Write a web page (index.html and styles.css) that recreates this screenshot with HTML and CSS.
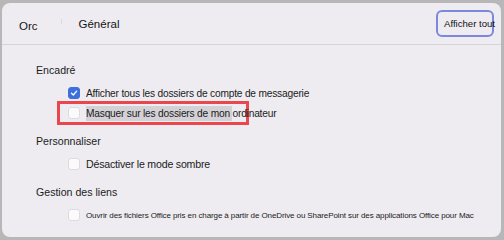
FILE: index.html
```html
<!DOCTYPE html>
<html lang="fr">
<head>
<meta charset="utf-8">
<link rel="stylesheet" href="styles.css">
</head>
<body>
<div class="window">
  <header class="header">
    <div class="tabs">
      <span class="tab tab-first">Orc</span>
      <span class="divider"></span>
      <span class="tab">Général</span>
    </div>
    <button class="show-all">Afficher tout</button>
  </header>
  <main class="content">
    <section class="group">
      <h2 class="group-title">Encadré</h2>
      <label class="option">
        <span class="box checked"><svg viewBox="0 0 12 12" width="12" height="12"><path d="M3 6.3 L5.2 8.4 L9.2 3.8" fill="none" stroke="#fff" stroke-width="1.6" stroke-linecap="round" stroke-linejoin="round"/></svg></span>
        <span class="label">Afficher tous les dossiers de compte de messagerie</span>
      </label>
      <label class="option highlighted">
        <span class="box"></span>
        <span class="label selected">Masquer sur les dossiers de mon ordinateur</span>
      </label>
    </section>
    <section class="group">
      <h2 class="group-title">Personnaliser</h2>
      <label class="option">
        <span class="box"></span>
        <span class="label big">Désactiver le mode sombre</span>
      </label>
    </section>
    <section class="group">
      <h2 class="group-title">Gestion des liens</h2>
      <label class="option">
        <span class="box"></span>
        <span class="label small">Ouvrir des fichiers Office pris en charge à partir de OneDrive ou SharePoint sur des applications Office pour Mac</span>
      </label>
    </section>
  </main>
</div>
</body>
</html>
```
FILE: styles.css
```css
html, body {
  margin: 0;
  padding: 0;
}
body {
  background: #b7b7b8;
  width: 504px;
  height: 240px;
  box-sizing: border-box;
  padding: 3px 3px 3px 2px;
  font-family: "Liberation Sans", Arial, sans-serif;
  color: #1b1b1b;
}
.window {
  height: 100%;
  background: #eeecf1;
  border-radius: 8px;
  display: flex;
  flex-direction: column;
  overflow: hidden;
}
.header {
  height: 41px;
  flex: none;
  display: flex;
  align-items: center;
  justify-content: space-between;
  border-bottom: 1px solid #d6d4d9;
  padding: 0 7px 0 17px;
}
.tabs {
  display: flex;
  align-items: flex-start;
  padding-top: 3px;
}
.tab {
  font-size: 11.5px;
  line-height: 14px;
  color: #141414;
}
.tab-first {
  margin-top: 2px;
}
.divider {
  width: 1px;
  height: 5px;
  margin: 2px 17px 0 23px;
  background: #dcdadf;
}
.show-all {
  font-family: inherit;
  font-size: 9.6px;
  color: #111;
  background: transparent;
  border: 2px solid #7c87df;
  border-radius: 6px;
  height: 27px;
  width: 58px;
  padding: 0 0 0 6px;
  text-align: left;
  white-space: nowrap;
}
.content {
  padding: 17px 0 0 34px;
  display: flex;
  flex-direction: column;
  gap: 10px;
}
.group {
  display: flex;
  flex-direction: column;
}
.group-title {
  margin: 0 0 5px;
  font-size: 10.6px;
  font-weight: normal;
  line-height: 16px;
}
.option {
  display: flex;
  align-items: center;
  gap: 6px;
  margin-left: 32px;
  height: 20px;
}
.box {
  width: 10px;
  height: 10px;
  border-radius: 3px;
  background: #fbfbfc;
  border: 1px solid #dddbe0;
  display: flex;
  align-items: center;
  justify-content: center;
  flex: none;
}
.box.checked {
  background: #3c70dc;
  border-color: #3c70dc;
}
.label {
  font-size: 10.2px;
  letter-spacing: -0.2px;
  white-space: nowrap;
}
.label.big {
  font-size: 10.6px;
}
.label.small {
  font-size: 8px;
  letter-spacing: -0.1px;
}
.highlighted {
  box-sizing: border-box;
  border: 3px solid #e9474d;
  margin-left: 21px;
  padding-left: 8px;
  width: 192px;
  height: 24px;
  margin-top: -2px;
  margin-bottom: -2px;
}
.selected {
  padding: 2px 0;
  background: linear-gradient(to right, #d3d1d6 146px, transparent 146px);
}
```
